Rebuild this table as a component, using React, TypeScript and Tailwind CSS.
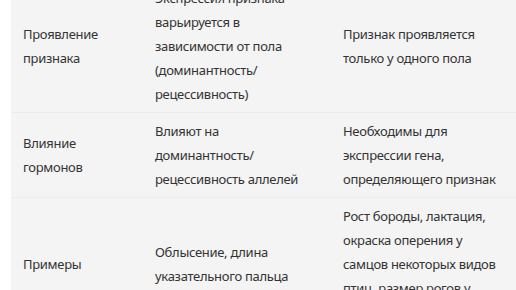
const rows = [
  {
    name: "Проявление признака",
    influenced: "Экспрессия признака варьируется в зависимости от пола (доминантность/ рецессивность)",
    limited: "Признак проявляется только у одного пола",
  },
  {
    name: "Влияние гормонов",
    influenced: "Влияют на доминантность/ рецессивность аллелей",
    limited: "Необходимы для экспрессии гена, определяющего признак",
  },
  {
    name: "Примеры",
    influenced: "Облысение, длина указательного пальца",
    limited: "Рост бороды, лактация, окраска оперения у самцов некоторых видов птиц, размер рогов у оленей",
  },
]

export default function App() {
  return (
    <div className="h-[290px] w-[516px] overflow-hidden bg-white font-['Noto_Sans',sans-serif] text-[13px] leading-[24px] tracking-[-0.3px] text-[#333333]">
      <table className="-mt-[20px] ml-[11px] w-[505px] table-fixed border-collapse">
        <colgroup>
          <col className="w-[132px]" />
          <col className="w-[188px]" />
          <col />
        </colgroup>
        <tbody>
          {rows.map((r) => (
            <tr key={r.name} className="border-b border-[#ebebf0] bg-[#f4f4f4]">
              <td className="px-3 py-1.5 align-middle">{r.name}</td>
              <td className="px-3 py-1.5 align-middle">{r.influenced}</td>
              <td className="px-3 py-1.5 align-middle">{r.limited}</td>
            </tr>
          ))}
        </tbody>
      </table>
    </div>
  )
}
